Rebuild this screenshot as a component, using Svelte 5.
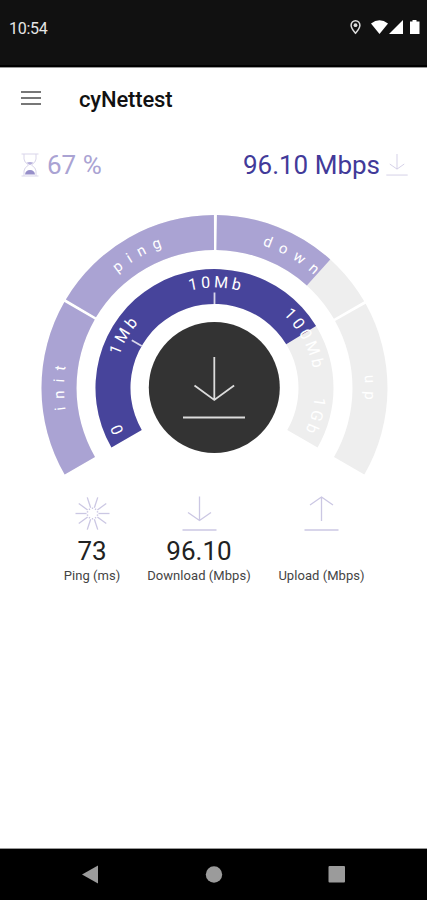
<script>
  const cx = 214.5;
  const cy = 188;

  let progress = 67;
  let speed = 96.1;

  // Angles are in degrees, clockwise from the top of the dial
  const phases = [
    { label: 'init', from: -120, to: -60.2, at: -88.6 },
    { label: 'ping', from: -59.2, to: -0.2, at: -28.8 },
    { label: 'down', from: 0.8, to: 59.9, at: 31.4 },
    { label: 'up', from: 60.9, to: 120, at: 91.2 }
  ];
  const marks = [
    { label: '0', at: -112.2 },
    { label: '1Mb', at: -59.5 },
    { label: '10Mb', at: 1 },
    { label: '100Mb', at: 61.8 },
    { label: '1Gb', at: 106 }
  ];
  const phaseEnd = 42;
  const speedEnd = 58.6;

  const results = [
    { icon: 'ping', value: '73', label: 'Ping (ms)' },
    { icon: 'down', value: speed.toFixed(2), label: 'Download (Mbps)' },
    { icon: 'up', value: '', label: 'Upload (Mbps)' }
  ];

  const rays = Array(10).fill().map((_, i) => 18 + i * 36);

  function point(r, deg) {
    const a = (deg * Math.PI) / 180;
    return `${(cx + r * Math.sin(a)).toFixed(2)} ${(cy - r * Math.cos(a)).toFixed(2)}`;
  }

  function band(r1, r2, from, to) {
    const large = to - from > 180 ? 1 : 0;
    return `M${point(r2, from)} A${r2} ${r2} 0 ${large} 1 ${point(r2, to)} L${point(r1, to)} A${r1} ${r1} 0 ${large} 0 ${point(r1, from)} Z`;
  }

  // Text track centred on the given angle
  function track(r, at) {
    return `M${point(r, at - 60)} A${r} ${r} 0 0 1 ${point(r, at + 60)}`;
  }
</script>

{#snippet arrow(up)}
  <path d={up ? 'M17 24.500V.5M5.500 8.500L17 .5l11.500 8' : 'M17 0v24M5.500 16l11.500 8 11.500-8'} />
  <path d="M0 33.500h34" />
{/snippet}

<div class="phone">
  <div class="status">
    <span class="clock">10:54</span>
    <svg width="72" height="18" viewBox="0 0 72 18">
      <path d="M7.500 2.800a4.400 4.400 0 0 1 4.400 4.400c0 3-4.400 8-4.400 8s-4.400-5-4.400-8a4.400 4.400 0 0 1 4.400-4.400z" fill="none" stroke="#ddd" stroke-width="1.500" />
      <circle cx="7.500" cy="7.200" r="1.900" fill="#ddd" />
      <path d="M23 5.500Q31.500-.8 40 5.500L31.500 16z" fill="#fff" />
      <path d="M41 16L55 2v14z" fill="#fff" />
      <path d="M62 3.500h2.500V2h4v1.500H71.500V16H62z" fill="#fff" />
    </svg>
  </div>

  <header>
    <button class="menu" aria-label="Menu">
      <span></span><span></span><span></span>
    </button>
    <h1>cyNettest</h1>
  </header>

  <div class="summary">
    <div class="progress">
      <svg width="18" height="24" viewBox="0 0 18 24">
        <path d="M.5 1h17M.5 23h17M3 1v5q0 3 4.500 6Q3 15 3 18v5M15 1v5q0 3-4.500 6 4.500 3 4.500 6v5" fill="none" stroke="#d9d5ea" />
        <path d="M5.500 9.800Q9 8 12.500 9.800L9 12z" fill="#b5afda" />
        <path d="M4 21.500q.5-4.500 5-4.500t5 4.500z" fill="#978fc9" />
      </svg>
      <span>{progress} %</span>
    </div>
    <div class="speed">
      <span>{speed.toFixed(2)} Mbps</span>
      <svg class="line" width="22" height="24" viewBox="-.5 -.5 35 36">{@render arrow(false)}</svg>
    </div>
  </div>

  <svg class="dial" width="427" height="280" viewBox="0 0 427 280">
    {#each phases as phase, i}
      <path d={band(138, 173, phase.from, phase.to)} fill="#eee" />
      {#if phase.from < phaseEnd}
        <path d={band(138, 173, phase.from, Math.min(phase.to, phaseEnd))} fill="#aaa3d3" />
      {/if}
      <path id="phase{i}" d={track(150.5, phase.at)} fill="none" />
      <text class="phase">
        <textPath href="#phase{i}" startOffset="50%">{phase.label}</textPath>
      </text>
    {/each}

    <path d={band(84, 119, -120, 120)} fill="#eee" />
    <path d={band(84, 119, -120, speedEnd)} fill="#47449b" />
    {#each [-60, 0] as tick}
      <path d="M{point(84, tick)} L{point(95.5, tick)}" stroke="#d8d6ea" stroke-width="1.800" />
    {/each}
    {#each marks as mark, i}
      <path id="mark{i}" d={track(100.5, mark.at)} fill="none" />
      <text class="mark">
        <textPath href="#mark{i}" startOffset="50%">{mark.label}</textPath>
      </text>
    {/each}

    <circle cx="214.300" cy="187.500" r="65.500" fill="#333" />
    <path d="M214.300 157v42M194.500 185.500l19.800 14.500 19.800-14.500M183 217.500h62" fill="none" stroke="#dcdcdc" stroke-width="1.800" />
  </svg>

  <div class="results">
    {#each results as result}
      <div class="result">
        <svg class="line" width="35" height="35" viewBox="-.5 -.5 35 35">
          {#if result.icon === 'ping'}
            {#each rays as ray}
              <path d="M17 11V0" transform="rotate({ray} 17 17)" />
              <path d="M17 12.500V11" transform="rotate({ray + 18} 17 17)" />
            {/each}
          {:else}
            {@render arrow(result.icon === 'up')}
          {/if}
        </svg>
        <strong>{result.value}</strong>
        <span>{result.label}</span>
      </div>
    {/each}
  </div>

  <nav>
    <svg width="18" height="20" viewBox="0 0 18 20"><path d="M0 9.500L16 .5v18z" fill="#9b9b9b" /></svg>
    <svg width="18" height="20" viewBox="0 0 18 20"><circle cx="9" cy="9.500" r="8.200" fill="#9b9b9b" /></svg>
    <svg width="18" height="20" viewBox="0 0 18 20"><rect x=".5" y="1" width="16.500" height="16.500" rx="1" fill="#9b9b9b" /></svg>
  </nav>
</div>

<style>
  .phone {
    display: flex;
    flex-direction: column;
    width: 427px;
    height: 900px;
    overflow: hidden;
    background: #fff;
    color: #222;
    font-family: Roboto, "Liberation Sans", sans-serif;
  }

  svg {
    display: block;
    flex: none;
  }

  .status {
    display: flex;
    justify-content: space-between;
    box-sizing: border-box;
    height: 67px;
    margin-bottom: 1px;
    padding: 18px 7px 0 9px;
    background: #111;
    border-bottom: 2px solid #000;
    box-shadow: 0 1px 0 #999;
  }

  .clock {
    color: #e6e6e6;
    font-size: 16px;
    line-height: 21px;
    letter-spacing: -0.3px;
  }

  header {
    display: flex;
    align-items: center;
    gap: 38px;
    height: 64px;
    padding-left: 21px;
  }

  .menu {
    display: flex;
    flex-direction: column;
    gap: 4px;
    width: 20px;
    margin-top: -5px;
    padding: 0;
    border: 0;
    background: none;
  }

  .menu span {
    height: 2px;
    background: #777;
  }

  h1 {
    margin: 0;
    color: #111;
    font-size: 22px;
    font-weight: 500;
    line-height: 26px;
    letter-spacing: -0.15px;
  }

  .summary {
    display: flex;
    justify-content: space-between;
    height: 68px;
    padding: 17px 19px 0 21px;
    box-sizing: border-box;
    font-size: 26px;
    line-height: 34px;
  }

  .progress,
  .speed {
    display: flex;
    align-items: center;
    height: 32px;
    gap: 6px;
  }

  .progress {
    gap: 8px;
    color: #aaa3d3;
  }

  .speed {
    color: #423a99;
  }

  .line {
    fill: none;
    stroke: #cbc7e3;
    stroke-width: 1.3;
  }

  .dial text {
    fill: #fff;
    text-anchor: middle;
  }

  .phase {
    font-size: 15px;
    letter-spacing: 7.8px;
  }

  .mark {
    font-size: 16px;
    letter-spacing: 3.2px;
  }

  .results {
    display: grid;
    grid-template-columns: 56px 104px 87px;
    justify-content: start;
    gap: 27px;
    padding: 16px 0 0 64px;
  }

  .result {
    display: flex;
    flex-direction: column;
    align-items: center;
  }

  .result strong {
    height: 32px;
    margin-top: 4px;
    font-size: 26px;
    font-weight: 400;
    line-height: 32px;
  }

  .result span {
    margin-top: 1px;
    color: #444;
    font-size: 13px;
    line-height: 16px;
    letter-spacing: 0.05px;
    white-space: nowrap;
  }

  nav {
    display: flex;
    justify-content: center;
    align-items: center;
    gap: 105px;
    height: 51px;
    margin-top: auto;
    background: #000;
    box-shadow: 0 -1px 0 #999;
  }
</style>
